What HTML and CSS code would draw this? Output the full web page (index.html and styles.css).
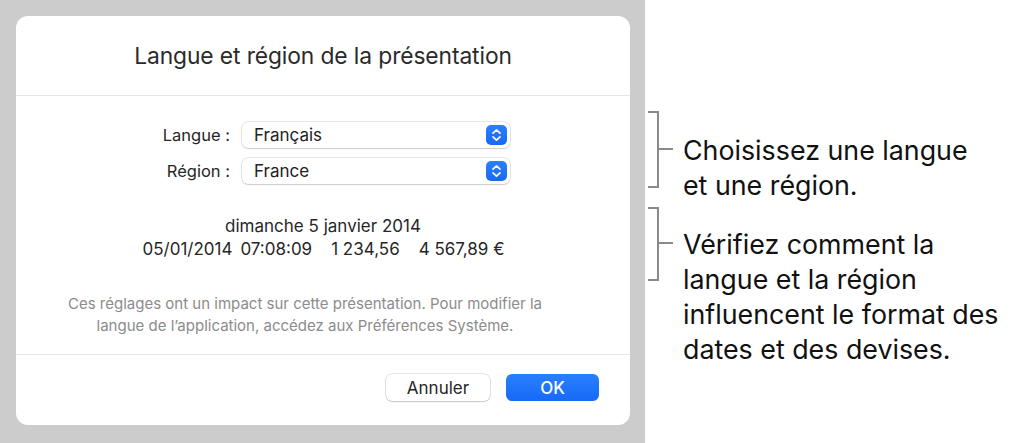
FILE: index.html
```html
<!DOCTYPE html>
<html lang="fr">
<head>
<meta charset="utf-8">
<title>Langue et région</title>
<link rel="stylesheet" href="styles.css">
</head>
<body>
<div class="page">
  <div class="stage">
    <div class="dialog">
      <div class="dlg-head">Langue et région de la présentation</div>
      <div class="dlg-body">
        <div class="form">
          <label class="lbl">Langue :</label>
          <div class="popup"><span>Français</span>
            <span class="stepper"><svg width="11" height="14" viewBox="0 0 11 14"><path d="M2 5.2 L5.5 1.8 L9 5.2 M2 8.8 L5.5 12.2 L9 8.8" fill="none" stroke="#fff" stroke-width="1.7" stroke-linecap="round" stroke-linejoin="round"/></svg></span>
          </div>
          <label class="lbl">Région :</label>
          <div class="popup"><span>France</span>
            <span class="stepper"><svg width="11" height="14" viewBox="0 0 11 14"><path d="M2 5.2 L5.5 1.8 L9 5.2 M2 8.8 L5.5 12.2 L9 8.8" fill="none" stroke="#fff" stroke-width="1.7" stroke-linecap="round" stroke-linejoin="round"/></svg></span>
          </div>
        </div>
        <div class="sample">
          <div>dimanche 5 janvier 2014</div>
          <div class="nums"><span>05/01/2014</span><span class="s1">07:08:09</span><span class="s2">1 234,56</span><span class="s2">4 567,89 €</span></div>
        </div>
        <p class="hint">Ces réglages ont un impact sur cette présentation. Pour modifier la<br>langue de l’application, accédez aux Préférences Système.</p>
      </div>
      <div class="dlg-foot">
        <button class="btn cancel">Annuler</button>
        <button class="btn ok">OK</button>
      </div>
    </div>
  </div>
  <div class="notes">
    <div class="note n1">
      <div class="bracket b1"></div>
      <div class="note-text">Choisissez une langue<br>et une région.</div>
    </div>
    <div class="note n2">
      <div class="bracket b2"></div>
      <div class="note-text">Vérifiez comment la<br>langue et la région<br>influencent le format des<br>dates et des devises.</div>
    </div>
  </div>
</div>
</body>
</html>
```

FILE: styles.css
```css
* { box-sizing: border-box; }
html, body { margin: 0; padding: 0; background: #fff; }
body {
  font-family: Inter, "Noto Sans", "Liberation Sans", sans-serif;
  color: #262626;
  width: 1020px;
  height: 443px;
  overflow: hidden;
}
.page { display: flex; height: 443px; }
.stage {
  width: 645px;
  height: 443px;
  background: #cccccc;
  padding: 16px 15px 0 16px;
}
.dialog {
  width: 614px;
  height: 409px;
  background: #fff;
  border-radius: 12px;
  display: flex;
  flex-direction: column;
}
.dlg-head {
  height: 80px;
  border-bottom: 1px solid #e6e6e6;
  display: flex;
  align-items: center;
  justify-content: center;
  font-size: 22.8px;
  color: #2a2a2a;
  padding-bottom: 1px;
  letter-spacing: -0.1px;
}
.dlg-body {
  flex: 1;
  border-bottom: 1px solid #e6e6e6;
  padding-top: 26px;
}
.form {
  display: grid;
  grid-template-columns: 214px 268px;
  column-gap: 12px;
  row-gap: 10px;
  align-items: center;
}
.lbl { text-align: right; font-size: 16.5px; color: #262626; }
.popup {
  height: 26px;
  border-radius: 6px;
  background: #fff;
  box-shadow: 0 0 0 0.5px rgba(0,0,0,0.18), 0 1px 1.5px rgba(0,0,0,0.12);
  display: flex;
  align-items: center;
  justify-content: space-between;
  padding: 0 3px 0 12px;
  font-size: 17px;
  color: #222;
}
.stepper {
  width: 21px;
  height: 20px;
  border-radius: 5px;
  background: linear-gradient(#2a80ff, #1769f7);
  display: flex;
  align-items: center;
  justify-content: center;
}
.sample {
  margin-top: 31px;
  text-align: center;
  font-size: 17px;
  line-height: 23px;
  color: #262626;
}
.nums { display: flex; justify-content: center; padding-left: 1px; }
.s1 { margin-left: 8px; }
.s2 { margin-left: 19px; }
.hint {
  margin: 32px 0 0;
  text-align: center;
  font-size: 15px;
  line-height: 22px;
  color: #8c8c8c;
  padding-right: 36px;
}
.dlg-foot {
  height: 70px;
  display: flex;
  justify-content: flex-end;
  align-items: flex-start;
  padding: 19px 31px 0 0;
  gap: 16px;
}
.btn {
  font-family: inherit;
  height: 27px;
  border-radius: 6px;
  border: none;
  font-size: 17px;
  padding: 0;
}
.cancel {
  width: 104px;
  background: #fff;
  color: #262626;
  box-shadow: 0 0 0 0.5px rgba(0,0,0,0.2), 0 1px 1.5px rgba(0,0,0,0.14);
}
.ok {
  width: 93px;
  background: linear-gradient(#2a80ff, #1769f7);
  color: #fff;
  font-weight: 500;
}
.notes { padding-left: 3px; }
.note { display: flex; align-items: flex-start; }
.n1 { margin-top: 111px; }
.n2 { margin-top: 4px; }
.bracket {
  position: relative;
  width: 11px;
  border-top: 2px solid #8a8a8a;
  border-right: 2px solid #8a8a8a;
  border-bottom: 2px solid #8a8a8a;
  flex: none;
}
.b1 { height: 77px; }
.b2 { height: 74px; }
.bracket::after {
  content: "";
  position: absolute;
  left: 9px;
  top: 50%;
  width: 16px;
  height: 2px;
  margin-top: -2px;
  background: #8a8a8a;
}
.note-text {
  margin-left: 24px;
  font-size: 26.8px;
  line-height: 35px;
  color: #111;
  white-space: nowrap;
}
.n1 .note-text { margin-top: 22px; }
.n2 .note-text { margin-top: 20px; }
```
